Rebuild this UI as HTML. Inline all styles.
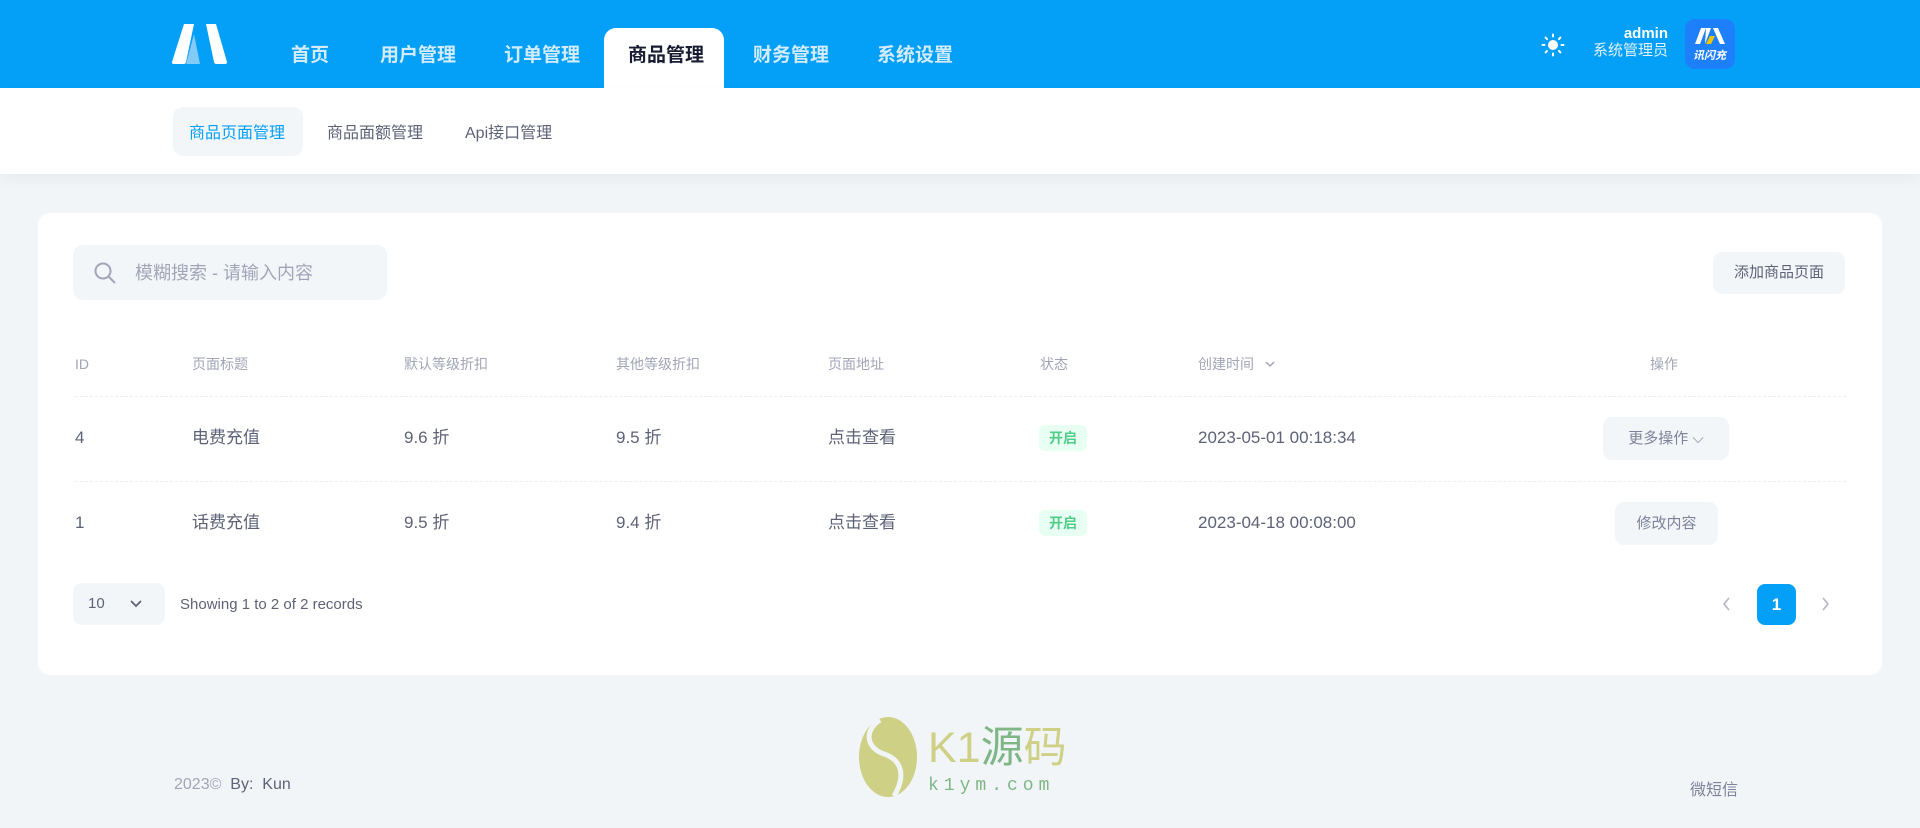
<!DOCTYPE html>
<html><head><meta charset="utf-8"><style>
*{margin:0;padding:0;box-sizing:border-box}
body{width:1920px;height:828px;background:#f2f5f8;font-family:"Liberation Sans","Noto Sans CJK SC",sans-serif;position:relative;overflow:hidden;color:#5e6278}
.a{position:absolute;white-space:nowrap}
.hdr{left:0;top:0;width:1920px;height:88px;background:#049ff6}
.sub{left:0;top:88px;width:1920px;height:86px;background:#fff;box-shadow:0 6px 14px rgba(0,0,0,.04)}
.nav{top:44px;font-size:19px;font-weight:bold;color:#d2ecfd;line-height:24px}
.card{left:38px;top:213px;width:1844px;height:462px;background:#fff;border-radius:12px}
.th{top:355px;font-size:14px;color:#a1a5b7;line-height:18px}
.td{font-size:17px;color:#5e6278;line-height:22px}
.line{left:75px;width:1771px;height:0;border-top:1px dashed #eceef3}
.tag{width:48px;height:26px;background:#e8fff3;color:#50cd89;font-size:14px;font-weight:bold;border-radius:6px;text-align:center;line-height:26px}
.btn{background:#f3f6f9;border-radius:9px;color:#7e8299;font-size:15px;text-align:center}
</style></head><body>
<div class="a hdr"></div>
<svg class="a" style="left:172px;top:24px" width="56" height="40" viewBox="0 0 56 40"><path d="M12 0h10L14 38c-.3 1-1 2-2 2H2c-1.5 0-2.3-1-2-2z" fill="#fff"/><path d="M34 0h10l11 38c.3 1-.5 2-2 2H44c-1 0-1.7-1-2-2z" fill="#fff"/><path d="M22 10l6 30h-14z" fill="#b9ddf8" opacity=".7"/></svg>
<div class="a nav" style="left:291px">首页</div>
<div class="a nav" style="left:380px">用户管理</div>
<div class="a nav" style="left:504px">订单管理</div>
<div class="a" style="left:604px;top:28px;width:120px;height:60px;background:#fff;border-radius:12px 12px 0 0"></div>
<div class="a nav" style="left:628px;color:#181c32">商品管理</div>
<div class="a nav" style="left:753px">财务管理</div>
<div class="a nav" style="left:877px">系统设置</div>
<svg class="a" style="left:1541px;top:33px" width="24" height="24" viewBox="0 0 24 24"><circle cx="12" cy="12" r="5" fill="#fff"/><g stroke="#fff" stroke-width="2" stroke-linecap="round"><path d="M12 1.5v2M12 20.5v2M1.5 12h2M20.5 12h2M4.6 4.6l1.4 1.4M18 18l1.4 1.4M4.6 19.4L6 18M18 6l1.4-1.4"/></g></svg>
<div class="a" style="right:252px;top:26px;font-size:15px;font-weight:bold;color:#fff;line-height:16px">admin</div>
<div class="a" style="right:252px;top:42px;font-size:15px;color:#e1f2fe;line-height:18px">系统管理员</div>
<div class="a" style="left:1685px;top:19px;width:50px;height:50px;background:#1e7ffb;border-radius:10px"></div>
<svg class="a" style="left:1695px;top:28px" width="30" height="18" viewBox="0 0 30 18"><path d="M6 0h5L5 16H0z M18 0h5l7 16h-5z" fill="#fff"/><path d="M11 0h5l-6 16z" fill="#fff"/><path d="M15 8h5l-4 8h-5z" fill="#f5c400"/></svg>
<div class="a" style="left:1693px;top:47px;font-size:11px;font-weight:bold;font-style:italic;color:#fff">讯闪充</div>
<div class="a sub"></div>
<div class="a" style="left:173px;top:107px;width:130px;height:49px;background:#f3f6f9;border-radius:10px"></div>
<div class="a" style="left:189px;top:119px;font-size:16px;color:#049ff6">商品页面管理</div>
<div class="a" style="left:327px;top:119px;font-size:16px;color:#5e6278">商品面额管理</div>
<div class="a" style="left:465px;top:119px;font-size:16px;color:#5e6278">Api接口管理</div>
<div class="a card"></div>
<div class="a" style="left:73px;top:245px;width:314px;height:55px;background:#f3f6f9;border-radius:10px"></div>
<svg class="a" style="left:93px;top:261px" width="24" height="24" viewBox="0 0 24 24" fill="none" stroke="#a1a5b7" stroke-width="2"><circle cx="10" cy="10" r="7.5"/><path d="M16 16l5.5 5.5" stroke-linecap="round"/></svg>
<div class="a" style="left:135px;top:259px;font-size:18px;color:#a1a5b7">模糊搜索 - 请输入内容</div>
<div class="a btn" style="left:1713px;top:252px;width:132px;height:42px;line-height:42px;font-size:15px;color:#5e6278">添加商品页面</div>
<div class="a th" style="left:75px">ID</div>
<div class="a th" style="left:192px">页面标题</div>
<div class="a th" style="left:404px">默认等级折扣</div>
<div class="a th" style="left:616px">其他等级折扣</div>
<div class="a th" style="left:828px">页面地址</div>
<div class="a th" style="left:1040px">状态</div>
<div class="a th" style="left:1198px">创建时间 <svg width="12" height="10" viewBox="0 0 12 10" style="margin-left:6px"><path d="M2 3l4 4 4-4" fill="none" stroke="#a1a5b7" stroke-width="1.5"/></svg></div>
<div class="a th" style="left:1650px">操作</div>
<div class="a line" style="top:396px"></div>
<div class="a line" style="top:481px"></div>
<div class="a td" style="left:75px;top:427px">4</div>
<div class="a td" style="left:192px;top:427px">电费充值</div>
<div class="a td" style="left:404px;top:427px">9.6 折</div>
<div class="a td" style="left:616px;top:427px">9.5 折</div>
<div class="a td" style="left:828px;top:427px">点击查看</div>
<div class="a tag" style="left:1039px;top:425px">开启</div>
<div class="a td" style="left:1198px;top:427px">2023-05-01 00:18:34</div>
<div class="a btn" style="left:1603px;top:417px;width:126px;height:43px;line-height:43px">更多操作 ⌵</div>
<div class="a td" style="left:75px;top:512px">1</div>
<div class="a td" style="left:192px;top:512px">话费充值</div>
<div class="a td" style="left:404px;top:512px">9.5 折</div>
<div class="a td" style="left:616px;top:512px">9.4 折</div>
<div class="a td" style="left:828px;top:512px">点击查看</div>
<div class="a tag" style="left:1039px;top:510px">开启</div>
<div class="a td" style="left:1198px;top:512px">2023-04-18 00:08:00</div>
<div class="a btn" style="left:1615px;top:502px;width:103px;height:43px;line-height:43px">修改内容</div>
<div class="a" style="left:73px;top:583px;width:92px;height:42px;background:#f3f6f9;border-radius:9px"></div>
<div class="a" style="left:88px;top:595px;font-size:15px;color:#5e6278">10</div>
<svg class="a" style="left:128px;top:598px" width="16" height="12" viewBox="0 0 16 12"><path d="M3 3l5 5 5-5" fill="none" stroke="#5e6278" stroke-width="1.8"/></svg>
<div class="a" style="left:180px;top:596px;font-size:15px;color:#5e6278">Showing 1 to 2 of 2 records</div>
<svg class="a" style="left:1720px;top:596px" width="14" height="16" viewBox="0 0 14 16"><path d="M9 2L4 8l5 6" fill="none" stroke="#b5b5c3" stroke-width="1.6"/></svg>
<div class="a" style="left:1757px;top:584px;width:39px;height:41px;background:#049ff6;border-radius:8px;color:#fff;font-weight:bold;font-size:17px;text-align:center;line-height:41px">1</div>
<svg class="a" style="left:1818px;top:596px" width="14" height="16" viewBox="0 0 14 16"><path d="M5 2l5 6-5 6" fill="none" stroke="#b5b5c3" stroke-width="1.6"/></svg>
<div class="a" style="left:174px;top:776px;font-size:16px;color:#a1a5b7">2023©&nbsp; <span style="color:#5e6278">By:&nbsp; Kun</span></div>
<div class="a" style="left:1690px;top:776px;font-size:16px;color:#7e8299">微短信</div>
<svg class="a" style="left:858px;top:716px" width="60" height="82" viewBox="0 0 60 82"><ellipse cx="30" cy="41" rx="29" ry="40" fill="#cdd085"/><path d="M22 4C6 14 8 32 26 38s22 22 10 42" fill="none" stroke="#f2f5f8" stroke-width="5"/></svg>
<div class="a" style="left:928px;top:724px;font-size:43px;line-height:48px;color:#cdd085;font-family:'Liberation Sans','Noto Sans CJK SC',sans-serif">K1<span style="color:#7fb686">源</span>码</div>
<div class="a" style="left:928px;top:776px;font-size:18px;letter-spacing:5px;color:#7fb686;font-family:'Liberation Mono',monospace">k1ym.com</div>
</body></html>
